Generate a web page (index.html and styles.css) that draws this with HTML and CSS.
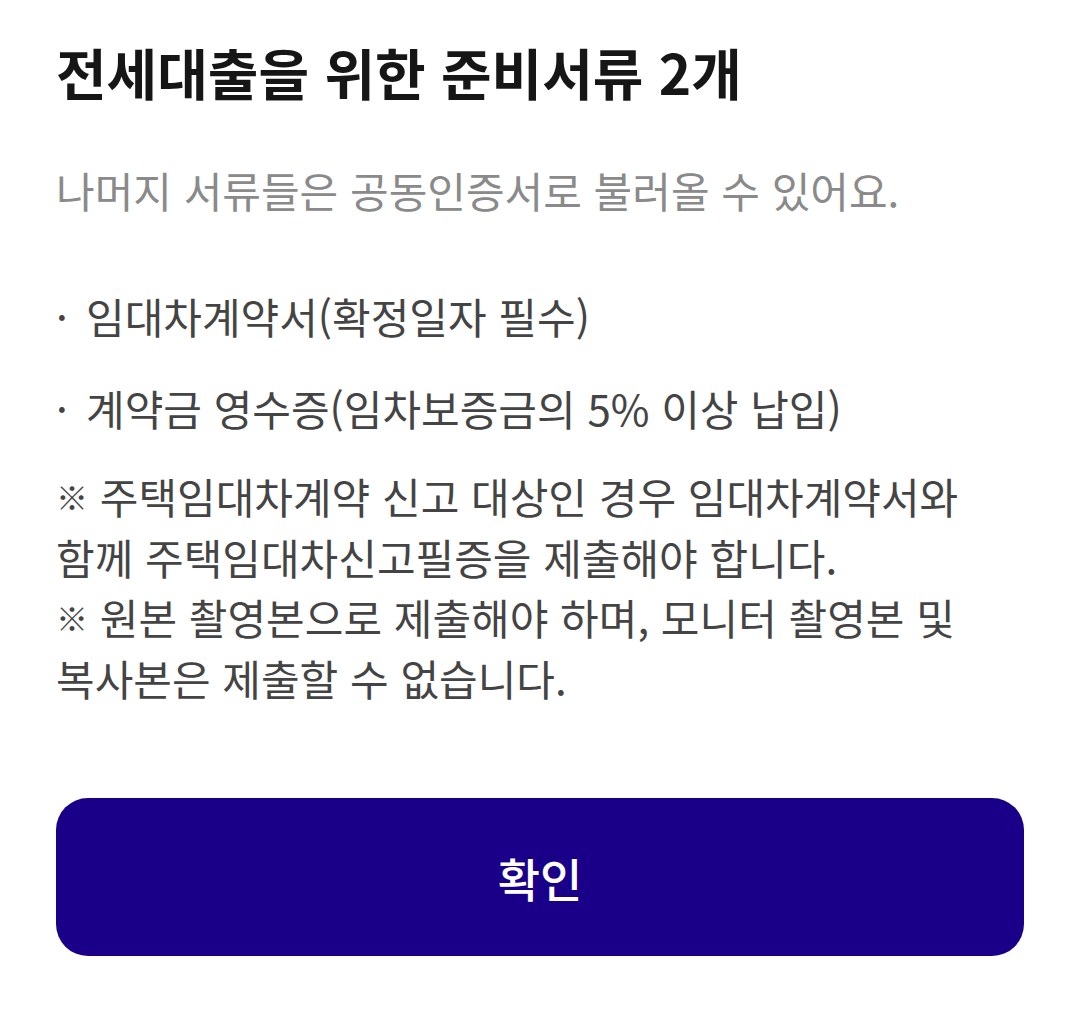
FILE: index.html
```html
<!DOCTYPE html>
<html lang="ko">
<head>
    <meta charset="UTF-8">
    <meta name="viewport" content="width=device-width, initial-scale=1.0">
    <title>전세대출 준비서류</title>
    <link rel="stylesheet" href="styles.css">
</head>
<body>
    <!-- 바텀시트 -->
    <div class="sheet">
        <h1 class="title">전세대출을 위한 준비서류 2개</h1>
        <p class="desc">나머지 서류들은 공동인증서로 불러올 수 있어요.</p>
        <!-- 서류 목록 -->
        <ul class="docs">
            <li><span class="dot">·</span>임대차계약서(확정일자 필수)</li>
            <li><span class="dot">·</span>계약금 영수증(임차보증금의 5% 이상 납입)</li>
        </ul>
        <!-- 안내 -->
        <p class="notice"><span class="mark">※</span> 주택임대차계약 신고 대상인 경우 임대차계약서와<br>함께 주택임대차신고필증을 제출해야 합니다.<br><span class="mark">※</span> 원본 촬영본으로 제출해야 하며, 모니터 촬영본 및<br>복사본은 제출할 수 없습니다.</p>
        <button class="ok">확인</button>
    </div>
</body>
</html>
```

FILE: styles.css
```css
:root{
    --text-strong: #161616;
    --text-body: #444444;
    --text-sub: #8a8a8a;
    --brand: #1a0089;
}
body{
    margin: 0;
    background-color: #ffffff;
    font-family: "Noto Sans CJK KR", "Noto Sans", sans-serif;
}
.sheet{
    padding: 38px 57px 0 56px;
}
.title{
    margin: 0;
    font-size: 55px;
    line-height: 66px;
    font-weight: 700;
    color: var(--text-strong);
}
.desc{
    margin: 56px 0 0 0;
    font-size: 42px;
    line-height: 60px;
    color: var(--text-sub);
}
.docs{
    list-style: none;
    margin: 66px 0 0 0;
    padding: 0;
}
.docs li{
    font-size: 42px;
    line-height: 60px;
    color: var(--text-body);
    margin-bottom: 32px;
}
.docs li:last-child{
    margin-bottom: 0;
}
.dot{
    display: inline-block;
    width: 30px;
    text-align: left;
}
.notice{
    margin: 28px 0 0 0;
    font-size: 42px;
    line-height: 60.5px;
    color: var(--text-body);
}
.mark{
    font-size: 32px;
    font-weight: 700;
    line-height: 1;
    vertical-align: 0.14em;
}
.ok{
    display: block;
    width: 100%;
    height: 158px;
    margin-top: 90px;
    border: 0;
    border-radius: 32px;
    background-color: var(--brand);
    color: #ffffff;
    font-family: inherit;
    font-size: 46px;
    font-weight: 500;
}
```
